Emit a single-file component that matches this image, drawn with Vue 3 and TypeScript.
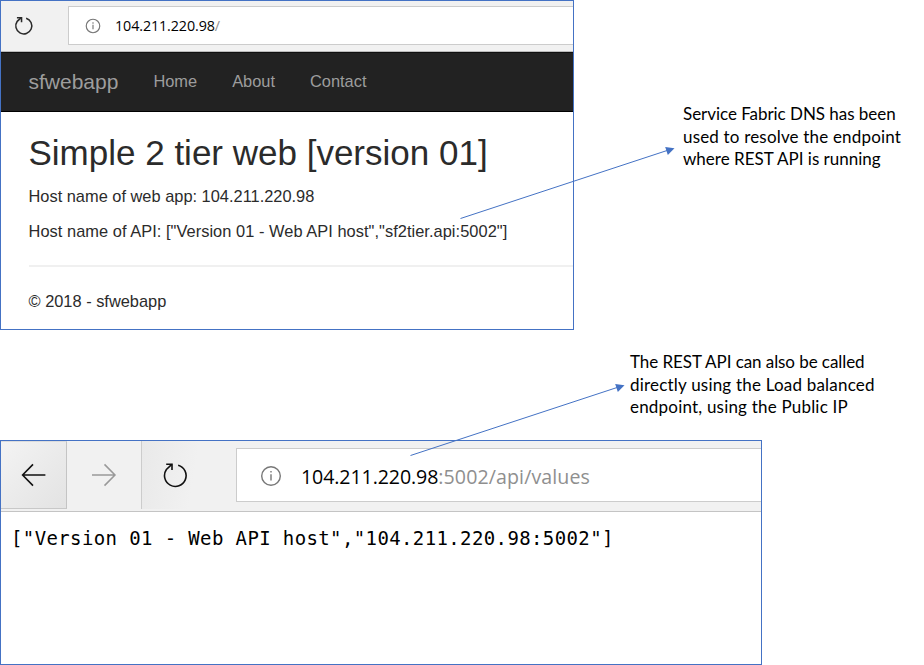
<script setup lang="ts">
interface Connector {
  x1: number
  y1: number
  x2: number
  y2: number
  head: string
}

const navLinks: string[] = ['Home', 'About', 'Contact']

const connectors: Connector[] = [
  { x1: 460.5, y1: 218.5, x2: 668, y2: 150.2, head: '674.5,148.3 665.2,147 667.8,155' },
  { x1: 410.5, y1: 455.5, x2: 618, y2: 387.2, head: '624.5,385.3 615.2,384 617.8,392' },
]

const dnsNote: string[] = ['Service Fabric DNS has been', 'used to resolve the endpoint', 'where REST API is running']
const apiNote: string[] = ['The REST API can also be called', 'directly using the Load balanced', 'endpoint, using the Public IP']
</script>

<template>
  <main class="canvas">
    <section class="row top">
      <div class="frame web">
        <header class="bar">
          <div class="reload">
            <svg width="20" height="20" viewBox="0 0 26 26" fill="none" stroke="#2a2a2a" stroke-width="2">
              <path d="M15.8 2.9A10.4 10.4 0 1 1 4.2 6.9L9.4 2.2" />
              <path d="M3.8 2.2H9.8V8" />
            </svg>
          </div>
          <div class="address">
            <svg class="info" width="16" height="16" viewBox="0 0 22 22" fill="none" stroke="#777" stroke-width="1.6">
              <circle cx="11" cy="11" r="9.3" />
              <path d="M11 9.2V15.6M11 6V7.8" />
            </svg>
            <span class="url"><b>104.211.220.98</b>/</span>
          </div>
        </header>
        <nav class="navbar">
          <span class="brand">sfwebapp</span>
          <a v-for="link in navLinks" :key="link">{{ link }}</a>
        </nav>
        <article class="content">
          <h2>Simple 2 tier web [version 01]</h2>
          <p>Host name of web app: 104.211.220.98</p>
          <p class="host">Host name of API: ["Version 01 - Web API host","sf2tier.api:5002"]</p>
          <hr />
          <footer>© 2018 - sfwebapp</footer>
        </article>
      </div>
      <div class="note dns">
        <span v-for="(line, i) in dnsNote" :key="line" :class="'l' + i">{{ line }}</span>
      </div>
    </section>

    <div class="note api">
      <span v-for="(line, i) in apiNote" :key="line" :class="'l' + i">{{ line }}</span>
    </div>

    <section class="frame values">
      <header class="bar">
        <div class="btn back">
          <svg width="26" height="24" viewBox="0 0 26 24" fill="none" stroke="#111" stroke-width="1.6">
            <path d="M24.4 12H1.7M12 1.4L1.6 12L12 22.6" />
          </svg>
        </div>
        <div class="btn forward">
          <svg width="26" height="24" viewBox="0 0 26 24" fill="none" stroke="#999" stroke-width="1.5">
            <path d="M1 12H24.2M13.5 1.4L24 12L13.5 22.6" />
          </svg>
        </div>
        <div class="btn refresh">
          <svg width="26" height="26" viewBox="0 0 26 26" fill="none" stroke="#111" stroke-width="1.6">
            <path d="M16.2 3.2A10.8 10.8 0 1 1 4.4 7.5L9.8 2.4" />
            <path d="M4.2 2.2H10V8" />
          </svg>
        </div>
        <div class="address">
          <svg class="info" width="22" height="22" viewBox="0 0 22 22" fill="none" stroke="#777" stroke-width="1.4">
            <circle cx="11" cy="11" r="9.3" />
            <path d="M11 9.2V15.6M11 6V7.6" />
          </svg>
          <span class="url"><b>104.211.220.98</b><i>:5002/api/values</i></span>
        </div>
      </header>
      <pre class="json">["Version 01 - Web API host","104.211.220.98:5002"]</pre>
    </section>

    <svg class="connectors" width="924" height="665" viewBox="0 0 924 665">
      <g v-for="c in connectors" :key="c.head">
        <line :x1="c.x1" :y1="c.y1" :x2="c.x2" :y2="c.y2" stroke="#4472c4" stroke-width="1" />
        <polygon :points="c.head" fill="#4472c4" />
      </g>
    </svg>
  </main>
</template>

<style>
body {
  margin: 0;
  background: #fff;
}
</style>

<style scoped>
.canvas {
  position: relative;
  box-sizing: border-box;
  width: 924px;
  height: 665px;
  overflow: hidden;
}
.canvas * {
  box-sizing: border-box;
}
.connectors {
  position: absolute;
  left: 0;
  top: 0;
}
.row {
  display: flex;
  height: 330px;
}
.frame {
  border: 1px solid #4472c4;
  background: #fff;
  overflow: hidden;
}
.bar {
  display: flex;
  background: #f1f1f1;
}
.address {
  display: flex;
  align-items: center;
  flex: 1;
  background: #fff;
  border: 1px solid #ccc;
  border-right: 0;
}
.info {
  flex: none;
}
.url {
  font-family: 'Open Sans', 'Noto Sans', sans-serif;
  color: #8f8f8f;
  white-space: nowrap;
}
.url b {
  font-weight: 400;
  color: #000;
}
.url i {
  font-style: normal;
  letter-spacing: 0.1px;
}

.web {
  width: 574px;
  height: 330px;
}
.web .bar {
  height: 51px;
  padding: 5px 0 6px;
  border-bottom: 1px solid #bbb;
}
.web .reload {
  width: 67px;
  padding: 10px 0 0 13px;
}
.web .address {
  height: 39px;
  padding-left: 16px;
}
.web .url {
  margin-left: 14px;
  font-size: 14.3px;
  letter-spacing: -0.1px;
}
.navbar {
  display: flex;
  align-items: center;
  height: 60px;
  padding: 0 0 1px 27.5px;
  background: #222;
  border-top: 1px solid #101010;
  border-bottom: 1px solid #000;
  font-family: 'Liberation Sans', Arial, sans-serif;
  font-size: 16.4px;
  color: #9d9d9d;
}
.navbar a {
  margin-left: 35px;
}
.brand {
  font-size: 21px;
}
.content {
  padding-left: 27.5px;
  font-family: 'Liberation Sans', Arial, sans-serif;
  font-size: 16.4px;
  line-height: 23px;
  color: #2b2b2b;
}
h2 {
  margin: 21px 0 13px;
  font-size: 35px;
  font-weight: 400;
  line-height: 39px;
}
.content p {
  margin: 0 0 12px;
  white-space: nowrap;
}
.content .host {
  letter-spacing: 0.045px;
}
hr {
  margin: 22px 0 23px;
  border: 0;
  border-top: 2px solid #f0f0f0;
}

.note {
  display: flex;
  flex-direction: column;
  font-family: Lato, Carlito, sans-serif;
  font-size: 17px;
  line-height: 22.5px;
  color: #000;
  white-space: nowrap;
}
.note span {
  align-self: flex-start;
}
.dns {
  margin: 103px 0 0 109px;
}
.dns .l0 {
  letter-spacing: -0.04px;
}
.dns .l1 {
  letter-spacing: 0.18px;
}
.note.api {
  margin: 21px 0 0 630px;
  height: 89px;
}
.note.api .l0 {
  letter-spacing: -0.07px;
}
.note.api .l1 {
  letter-spacing: 0.2px;
}
.note.api .l2 {
  letter-spacing: 0.2px;
}

.values {
  width: 762px;
  height: 225px;
}
.values .bar {
  height: 71px;
  border-bottom: 1px solid #c4c4c4;
}
.btn {
  height: 68px;
}
.back {
  width: 66px;
  padding: 21px 0 0 20px;
  background: linear-gradient(135deg, #f3f3f3, #e3e3e3);
  border-top: 1px solid #dcdcdc;
  border-right: 1px solid #c4c4c4;
  border-bottom: 1px solid #c8c8c8;
}
.forward {
  width: 74px;
  padding: 22px 0 0 24px;
}
.refresh {
  width: 95px;
  padding: 21px 0 0 20px;
  border-left: 1px solid #ccc;
  background: linear-gradient(100deg, #e9e9e9, #f1f1f1 55%);
}
.values .address {
  height: 54px;
  margin-top: 7px;
  padding: 2px 0 0 23px;
}
.values .url {
  margin-left: 19px;
  font-size: 19.6px;
  letter-spacing: -0.1px;
}
.json {
  margin: 13px 0 0 10px;
  font-family: 'DejaVu Sans Mono', monospace;
  font-size: 19px;
  letter-spacing: 0.38px;
  line-height: 26px;
  color: #000;
}
</style>
